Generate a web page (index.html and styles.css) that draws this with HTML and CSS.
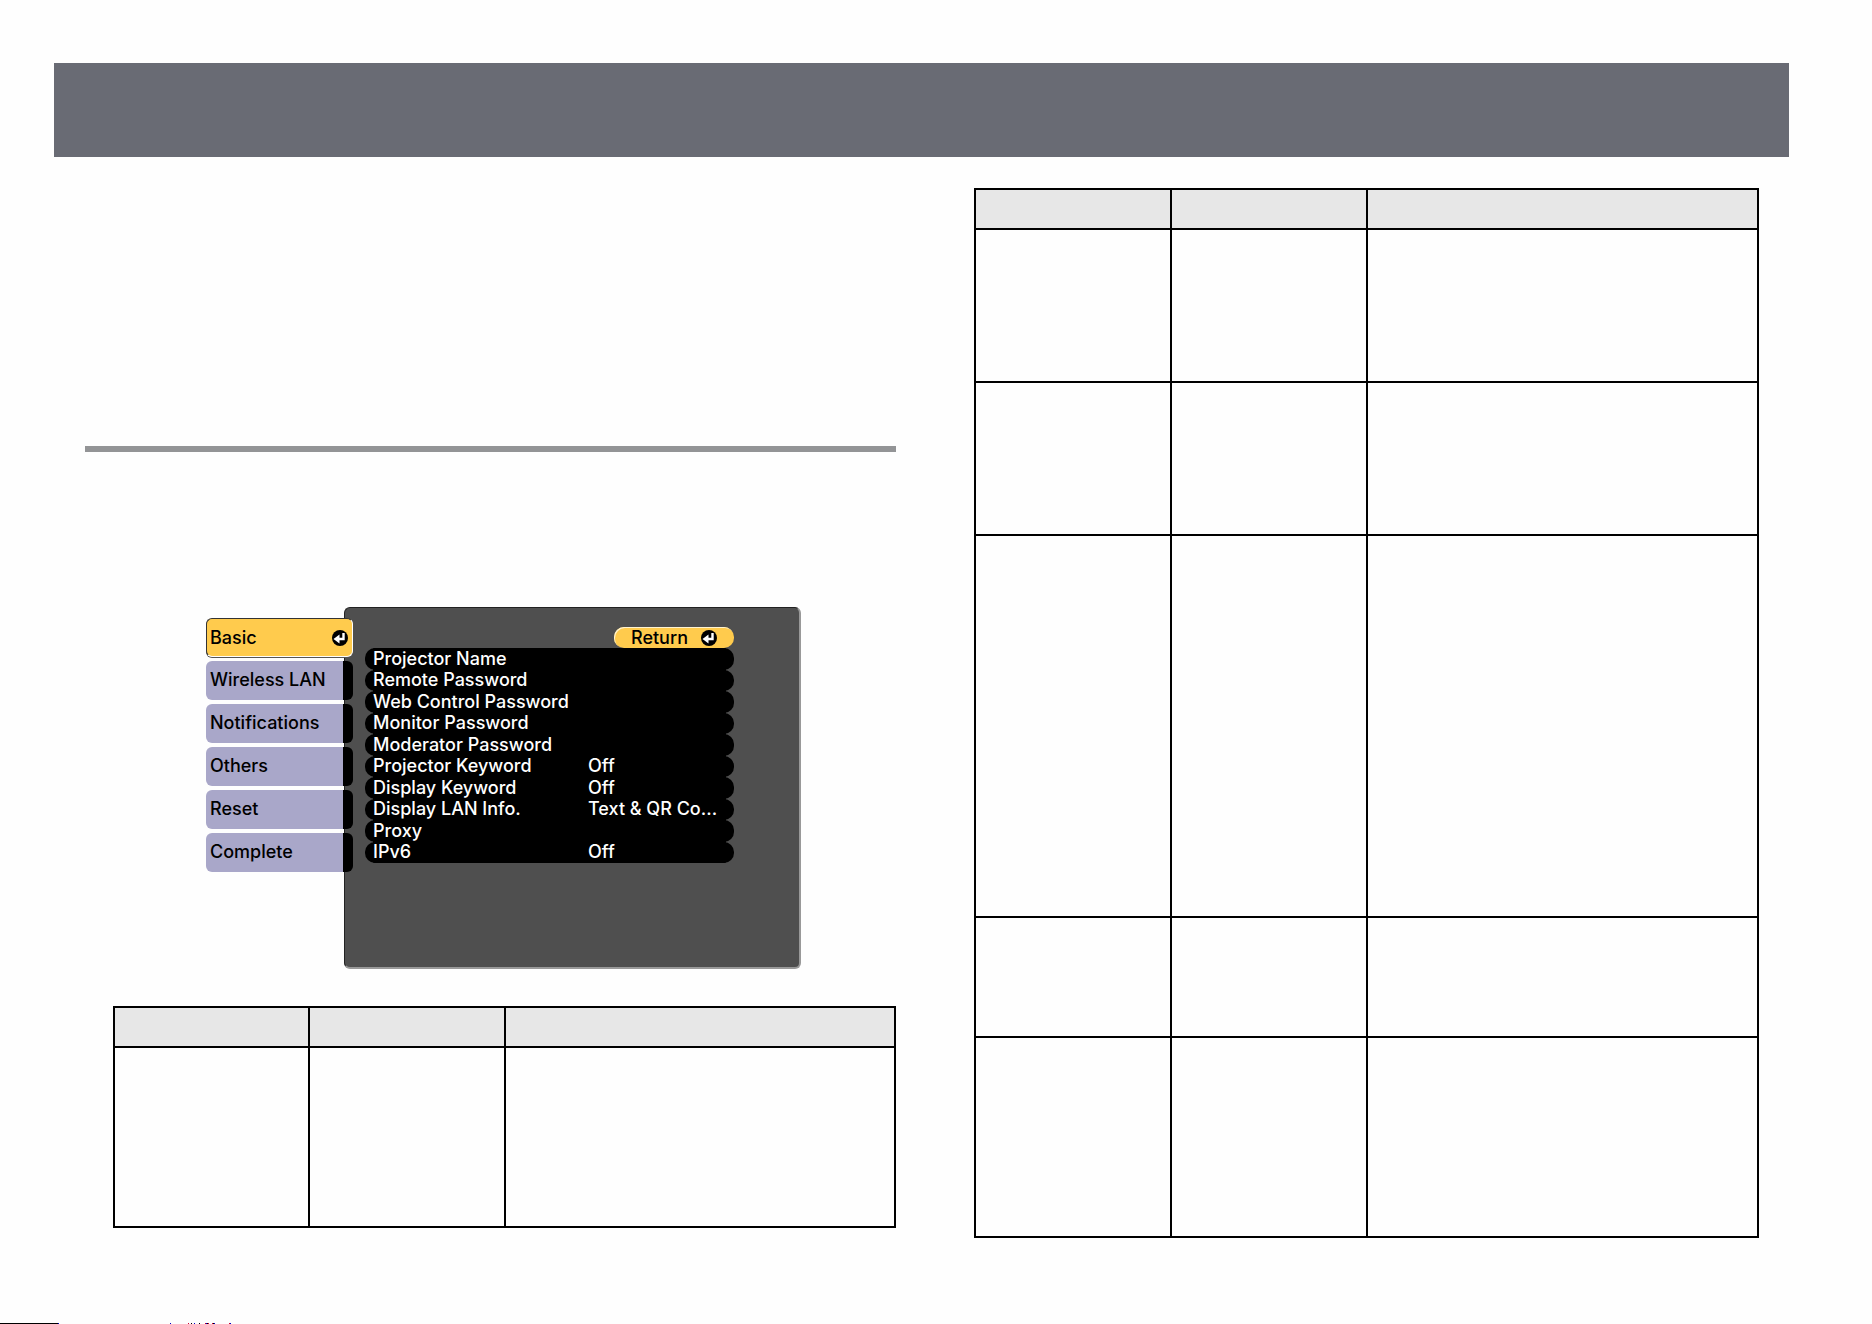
FILE: index.html
```html
<!DOCTYPE html>
<html lang="en">
<head>
    <meta charset="UTF-8">
    <meta name="viewport" content="width=device-width, initial-scale=1.0">
    <title>Network Menu - Basic</title>
    <link rel="stylesheet" href="styles.css">
</head>
<body>
    <header class="banner"></header>

    <main class="columns">
        <section class="column-left">
            <hr class="section-rule">

            <div class="osd">
                <nav class="osd-tabs">
                    <button type="button" class="tab active">
                        Basic
                        <svg class="enter-icon" viewBox="0 0 16 16" aria-hidden="true">
                            <circle cx="8" cy="8" r="8" fill="#000"/>
                            <path d="M11.5 3V9H6" fill="none" stroke="#fff" stroke-width="2.4"/>
                            <path d="M1.5 9L7.5 4.5V13.5Z" fill="#fff"/>
                        </svg>
                    </button>
                    <button type="button" class="tab">Wireless LAN</button>
                    <button type="button" class="tab">Notifications</button>
                    <button type="button" class="tab">Others</button>
                    <button type="button" class="tab">Reset</button>
                    <button type="button" class="tab">Complete</button>
                </nav>
                <div class="osd-panel">
                    <button type="button" class="return-btn">
                        Return
                        <svg class="enter-icon" viewBox="0 0 16 16" aria-hidden="true">
                            <circle cx="8" cy="8" r="8" fill="#000"/>
                            <path d="M11.5 3V9H6" fill="none" stroke="#fff" stroke-width="2.4"/>
                            <path d="M1.5 9L7.5 4.5V13.5Z" fill="#fff"/>
                        </svg>
                    </button>
                    <div class="osd-menu">
                        <button type="button" class="item"><span>Projector Name</span></button>
                        <button type="button" class="item"><span>Remote Password</span></button>
                        <button type="button" class="item"><span>Web Control Password</span></button>
                        <button type="button" class="item"><span>Monitor Password</span></button>
                        <button type="button" class="item"><span>Moderator Password</span></button>
                        <button type="button" class="item"><span>Projector Keyword</span><span>Off</span></button>
                        <button type="button" class="item"><span>Display Keyword</span><span>Off</span></button>
                        <button type="button" class="item"><span>Display LAN Info.</span><span>Text &amp; QR Co...</span></button>
                        <button type="button" class="item"><span>Proxy</span></button>
                        <button type="button" class="item"><span>IPv6</span><span>Off</span></button>
                    </div>
                </div>
            </div>

            <table class="settings indented">
                <colgroup><col class="narrow"><col class="narrow"><col></colgroup>
                <thead>
                    <tr><th></th><th></th><th></th></tr>
                </thead>
                <tbody>
                    <tr class="row-lg"><td></td><td></td><td></td></tr>
                </tbody>
            </table>
        </section>

        <section class="column-right">
            <table class="settings">
                <colgroup><col class="narrow"><col class="narrow"><col></colgroup>
                <thead>
                    <tr><th></th><th></th><th></th></tr>
                </thead>
                <tbody>
                    <tr class="row-md"><td></td><td></td><td></td></tr>
                    <tr class="row-md"><td></td><td></td><td></td></tr>
                    <tr class="row-xxl"><td></td><td></td><td></td></tr>
                    <tr class="row-sm"><td></td><td></td><td></td></tr>
                    <tr class="row-xl"><td></td><td></td><td></td></tr>
                </tbody>
            </table>
        </section>
    </main>

    <footer class="page-edge">
        <svg width="240" height="1" viewBox="0 0 240 1" shape-rendering="crispEdges" aria-hidden="true">
            <path d="M0 0H58V1H0ZM191 0H192V1H191ZM199 0H200V1H199ZM207 0H208V1H207ZM213 0H214V1H213Z" fill="#000"/>
            <path d="M58 0H59V1H58ZM170 0H171V1H170ZM194 0H195V1H194ZM206 0H207V1H206ZM214 0H215V1H214ZM230 0H231V1H230Z" fill="#00c"/>
            <path d="M188 0H189V1H188ZM205 0H206V1H205ZM208 0H209V1H208ZM212 0H213V1H212ZM229 0H230V1H229Z" fill="#c03"/>
        </svg>
    </footer>
</body>
</html>
```
FILE: styles.css
```css
* {
    box-sizing: border-box;
}
body {
    display: flex;
    flex-direction: column;
    min-height: 100vh;
    margin: 0;
    padding-top: 63px;
    background-color: #fefefe;
    font-family: Inter, "Liberation Sans", sans-serif;
}
.banner {
    height: 94px;
    margin: 0 83px 0 54px;
    background-color: #696b74;
}
.columns {
    display: grid;
    grid-template-columns: 811fr 785fr;
    gap: 78px;
    flex: 1;
    padding: 31px 113px 0 85px;
}
.section-rule {
    height: 6px;
    margin: 258px 0 155px;
    border: none;
    background-color: #939496;
}

/* Projector on-screen menu */
.osd {
    display: flex;
    width: 595px;
    margin: 0 0 37px 121px;
}
.osd button {
    border: none;
    font-family: inherit;
    font-size: 18px;
    font-weight: 500;
    line-height: 20px;
    text-align: left;
    cursor: pointer;
}
.osd-tabs {
    position: relative;
    z-index: 1;
    display: flex;
    flex-direction: column;
    gap: 4px;
    width: 147px;
    margin: 11px -9px 0 0;
}
.osd-tabs .tab {
    display: flex;
    align-items: center;
    justify-content: space-between;
    height: 39px;
    padding: 0 5px 1px 4px;
    border-radius: 6px;
    background: linear-gradient(to right, #a9a7c9 137px, #000 137px);
    color: #000;
}
.osd-tabs .tab.active {
    border: 1px solid #333;
    border-right-color: #fff;
    border-bottom-color: #fff;
    padding: 0 4px 0 3px;
    background: #ffcb4d;
    box-shadow: 0 1px 0 #555;
}
.enter-icon {
    width: 16px;
    height: 16px;
}
.osd-panel {
    flex: 1;
    height: 362px;
    padding: 19px 65px 0 20px;
    border: 1px solid #222;
    border-right: 2px solid #999;
    border-bottom: 2px solid #999;
    border-radius: 6px;
    background-color: #4f4f4f;
}
.osd-panel .return-btn {
    display: flex;
    align-items: center;
    justify-content: space-between;
    width: 120px;
    height: 21px;
    margin-left: auto;
    padding: 0 17px;
    border-radius: 10px;
    background-color: #ffcb4d;
    box-shadow: inset 1px 1px 0 #fff3d0;
    color: #000;
}
.osd-menu {
    display: grid;
    grid-auto-rows: 1fr;
    height: 215px;
    border-radius: 10px;
    /* fills the middle so only the row ends look scalloped */
    background: linear-gradient(#000, #000) center / calc(100% - 16px) 100% no-repeat;
}
.osd-menu .item {
    display: grid;
    grid-template-columns: 215px 1fr;
    align-items: center;
    padding: 0 0 0 8px;
    border-radius: 10px;
    background-color: #000;
    color: #fff;
    white-space: nowrap;
}

/* Setting tables */
.settings {
    width: 100%;
    table-layout: fixed;
    border-collapse: collapse;
}
.settings.indented {
    width: calc(100% - 28px);
    margin-left: 28px;
}
.settings .narrow {
    width: 25%;
}
.settings th,
.settings td {
    padding: 0;
    border: 2px solid #000;
}
.settings th {
    height: 40px;
    background-color: #e7e7e7;
}
.row-sm {
    height: 120px;
}
.row-md {
    height: 153px;
}
.row-lg {
    height: 180px;
}
.row-xl {
    height: 200px;
}
.row-xxl {
    height: 382px;
}
.page-edge svg {
    display: block;
}
```
